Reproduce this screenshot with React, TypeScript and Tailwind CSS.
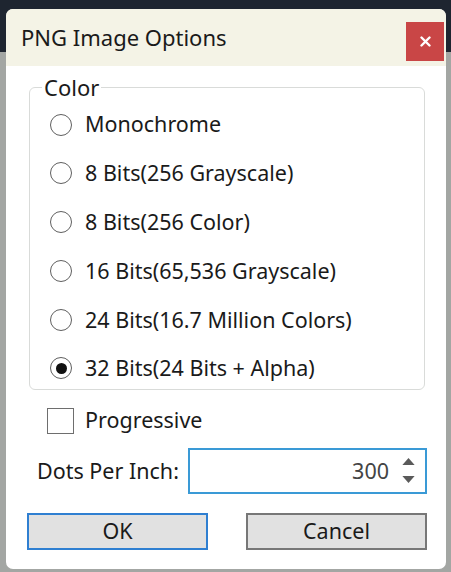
import React from 'react';

const options = [
  'Monochrome',
  '8 Bits(256 Grayscale)',
  '8 Bits(256 Color)',
  '16 Bits(65,536 Grayscale)',
  '24 Bits(16.7 Million Colors)',
  '32 Bits(24 Bits + Alpha)',
];

function Radio({ checked }: { checked: boolean }) {
  return (
    <span className="flex h-[22px] w-[22px] items-center justify-center rounded-full border-[1.5px] border-[#5f5f5f] bg-white">
      {checked && <span className="h-[11px] w-[11px] rounded-full bg-[#111]" />}
    </span>
  );
}

export default function App() {
  return (
    <div
      className="h-[572px] w-[451px] overflow-hidden bg-[linear-gradient(#1e2530_52px,#a3a6a3_52px)] pt-[9px] pl-[6px] text-[#1a1a1a]"
      style={{ fontFamily: '"Noto Sans", "Open Sans", Arial, sans-serif' }}
    >
      <div className="h-[560px] w-[440px] overflow-hidden rounded-[7px] bg-white">
        {/* Title bar */}
        <div className="flex h-[57px] items-start justify-between bg-[#f4f3e6] pr-[2px] pl-[15px]">
          <span className="mt-[14px] text-[22px] leading-[28px]">PNG Image Options</span>
          <button className="mt-[13px] flex h-[39px] w-[38px] items-center justify-center bg-[#c94646] text-white">
            <svg width="11" height="11" viewBox="0 0 11 11">
              <path d="M1.5 1.5L9.5 9.5M9.5 1.5L1.5 9.5" stroke="#fff" strokeWidth="2.4" strokeLinecap="round" />
            </svg>
          </button>
        </div>

        {/* Body */}
        <div className="pr-[19px] pl-[21px]">
          <fieldset className="mt-[6px] ml-[2px] w-[396px] rounded-[6px] border border-[#d9dbd9]">
            <legend className="ml-[12px] px-[2px] text-[22px] leading-[30px]">Color</legend>
            <div className="flex flex-col gap-[6.8px] pt-[1.5px]">
              {options.map((label, i) => (
                <label key={label} className="flex h-[42px] items-center gap-[13px] pl-[20px]">
                  <Radio checked={i === options.length - 1} />
                  <span className="text-[21.5px]">{label}</span>
                </label>
              ))}
            </div>
          </fieldset>

          <label className="mt-[14px] ml-[20px] flex items-center gap-[11px]">
            <span className="h-[26px] w-[27px] border-[1.5px] border-[#6e6e6e] bg-white" />
            <span className="text-[21.5px]">Progressive</span>
          </label>

          <div className="mt-[11px] flex items-center">
            <span className="ml-[10px] w-[151px] text-[21.5px]">Dots Per Inch:</span>
            <div className="flex h-[46px] w-[239px] items-center border-2 border-[#3a9ad6] bg-white">
              <span className="flex-1 pr-[8px] text-right text-[21.5px] text-[#444]">300</span>
              <div className="flex w-[28px] flex-col items-center gap-[11px] pr-[6px]">
                <svg width="13" height="7" viewBox="0 0 14 8">
                  <path d="M7 0L14 8H0Z" fill="#5a5a5a" />
                </svg>
                <svg width="13" height="7" viewBox="0 0 14 8">
                  <path d="M0 0H14L7 8Z" fill="#5a5a5a" />
                </svg>
              </div>
            </div>
          </div>

          <div className="mt-[19px] flex justify-between">
            <button className="h-[37px] w-[181px] border-2 border-[#2f7fd1] bg-[#e1e1e1] text-[21.5px] leading-none">OK</button>
            <button className="h-[37px] w-[181px] border-2 border-[#777] bg-[#e1e1e1] text-[21.5px] leading-none">Cancel</button>
          </div>
        </div>
      </div>
    </div>
  );
}
